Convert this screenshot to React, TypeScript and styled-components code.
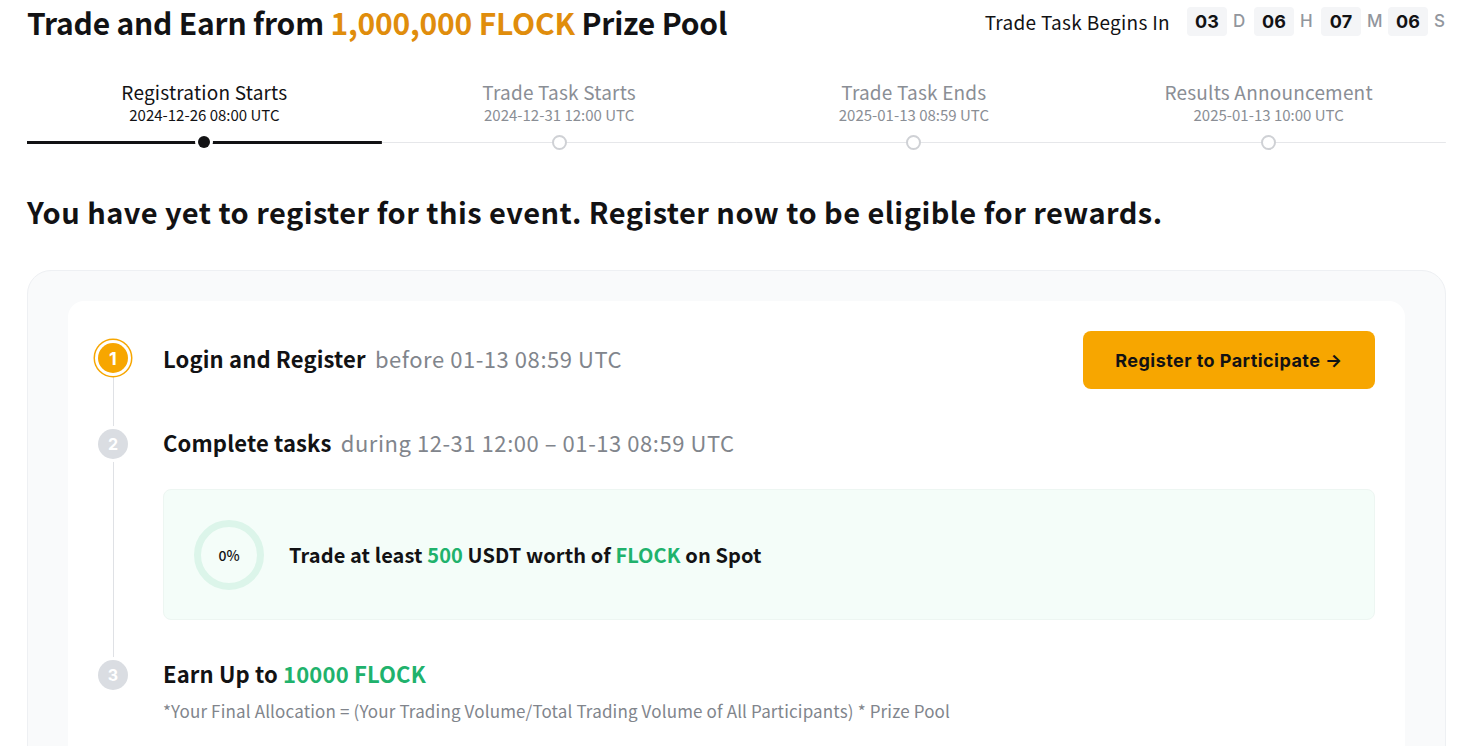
import styled, { createGlobalStyle } from 'styled-components';

const GlobalStyle = createGlobalStyle`
  html, body {
    margin: 0;
    padding: 0;
    background: #fff;
  }
  body {
    font-family: "Noto Sans CJK KR", "Noto Sans", sans-serif;
    color: #121214;
    overflow: hidden;
  }
`;

interface Milestone {
  label: string;
  date: string;
}

const milestones: Milestone[] = [
  { label: 'Registration Starts', date: '2024-12-26 08:00 UTC' },
  { label: 'Trade Task Starts', date: '2024-12-31 12:00 UTC' },
  { label: 'Trade Task Ends', date: '2025-01-13 08:59 UTC' },
  { label: 'Results Announcement', date: '2025-01-13 10:00 UTC' },
];

const countdown = [
  { value: '03', unit: 'D' },
  { value: '06', unit: 'H' },
  { value: '07', unit: 'M' },
  { value: '06', unit: 'S' },
];

export default function App() {
  return (
    <>
      <GlobalStyle />
      <Page>
        <Header>
          <Title>
            Trade and Earn from <Orange>1,000,000 FLOCK</Orange> Prize Pool
          </Title>
          <Countdown>
            <CountdownLabel>Trade Task Begins In</CountdownLabel>
            {countdown.map((c) => (
              <CountdownUnit key={c.unit}>
                <TimeBox>{c.value}</TimeBox>
                <UnitLetter>{c.unit}</UnitLetter>
              </CountdownUnit>
            ))}
          </Countdown>
        </Header>

        <Timeline>
          {milestones.map((m, i) => (
            <Milestone key={m.label}>
              <MilestoneLabel $active={i === 0}>{m.label}</MilestoneLabel>
              <MilestoneDate $active={i === 0}>{m.date}</MilestoneDate>
              <Track $active={i === 0}>
                <Dot $active={i === 0} />
              </Track>
            </Milestone>
          ))}
        </Timeline>

        <Notice>You have yet to register for this event. Register now to be eligible for rewards.</Notice>

        <OuterCard>
          <InnerCard>
            <Steps>
              <Step>
                <StepHead $tall>
                  <Badge $active>1</Badge>
                  <StepTitle>
                    Login and Register <Muted>before 01-13 08:59 UTC</Muted>
                  </StepTitle>
                  <RegisterButton>Register to Participate →</RegisterButton>
                </StepHead>
              </Step>

              <Step>
                <StepHead>
                  <Badge>2</Badge>
                  <StepTitle>
                    Complete tasks <Muted>during 12-31 12:00 – 01-13 08:59 UTC</Muted>
                  </StepTitle>
                </StepHead>
                <TaskBox>
                  <Progress>
                    <svg width="72" height="72" viewBox="0 0 72 72">
                      <circle cx="36" cy="36" r="31.5" fill="none" stroke="#dcf5ea" strokeWidth="7" />
                    </svg>
                    <ProgressValue>0%</ProgressValue>
                  </Progress>
                  <TaskText>
                    Trade at least <Green>500</Green> USDT worth of <Green>FLOCK</Green> on Spot
                  </TaskText>
                </TaskBox>
              </Step>

              <Step>
                <StepHead>
                  <Badge>3</Badge>
                  <StepTitle>
                    Earn Up to <Green>10000 FLOCK</Green>
                  </StepTitle>
                </StepHead>
                <Footnote>
                  *Your Final Allocation = (Your Trading Volume/Total Trading Volume of All Participants) * Prize Pool
                </Footnote>
              </Step>
            </Steps>
          </InnerCard>
        </OuterCard>
      </Page>
    </>
  );
}

const Page = styled.div`
  padding: 0 20px 0 27px;
`;

const Header = styled.header`
  display: flex;
  align-items: center;
  justify-content: space-between;
  height: 44px;
`;

const Title = styled.h1`
  margin: 0;
  font-size: 30px;
  font-weight: 700;
  line-height: 44px;
  letter-spacing: -0.2px;
`;

const Orange = styled.span`
  color: #e08d0c;
`;

const Countdown = styled.div`
  display: flex;
  align-items: center;
  margin-top: -2px;
`;

const CountdownLabel = styled.span`
  font-size: 19px;
  letter-spacing: 0.3px;
  margin-right: 17px;
`;

const CountdownUnit = styled.div`
  display: flex;
  align-items: center;
  gap: 6px;
  margin-right: 9px;

  &:last-child {
    margin-right: 0;
  }
`;

const TimeBox = styled.span`
  width: 40px;
  height: 29px;
  border-radius: 4px;
  background: #f4f5f7;
  display: grid;
  place-items: center;
  font-family: Inter, sans-serif;
  font-weight: 700;
  font-size: 18px;
`;

const UnitLetter = styled.span`
  font-family: Inter, sans-serif;
  font-size: 17px;
  font-weight: 500;
  color: #92969d;
  width: 12px;
`;

const Timeline = styled.div`
  display: grid;
  grid-template-columns: repeat(4, 1fr);
  margin-top: 36px;
`;

const Milestone = styled.div`
  display: flex;
  flex-direction: column;
  align-items: center;
`;

const MilestoneLabel = styled.div<{ $active: boolean }>`
  font-size: 19px;
  letter-spacing: 0.2px;
  line-height: 24px;
  color: ${({ $active }) => ($active ? '#121214' : '#8a8e95')};
`;

const MilestoneDate = styled.div<{ $active: boolean }>`
  font-size: 15px;
  line-height: 20px;
  margin-top: 1px;
  color: ${({ $active }) => ($active ? '#121214' : '#8a8e95')};
`;

const Track = styled.div<{ $active: boolean }>`
  align-self: stretch;
  height: 16px;
  margin-top: 9px;
  display: flex;
  align-items: center;
  justify-content: center;
  background: linear-gradient(
    ${({ $active }) => ($active ? '#121214' : '#e6e7ea')},
    ${({ $active }) => ($active ? '#121214' : '#e6e7ea')}
  )
    center / 100% ${({ $active }) => ($active ? '3px' : '1px')} no-repeat;
`;

const Dot = styled.span<{ $active: boolean }>`
  box-sizing: border-box;
  width: ${({ $active }) => ($active ? '12px' : '15px')};
  height: ${({ $active }) => ($active ? '12px' : '15px')};
  border-radius: 50%;
  background: ${({ $active }) => ($active ? '#121214' : '#fff')};
  border: ${({ $active }) => ($active ? 'none' : '2px solid #cfd1d5')};
  box-shadow: 0 0 0 ${({ $active }) => ($active ? '3px' : '0')} #fff;
`;

const Notice = styled.h2`
  margin: 41px 0 0;
  font-size: 29px;
  letter-spacing: 0.45px;
  font-weight: 700;
  line-height: 40px;
`;

const OuterCard = styled.section`
  margin-top: 39px;
  background: #f9fafb;
  border: 1px solid #eef0f3;
  border-radius: 24px;
  padding: 30px 40px;
`;

const InnerCard = styled.div`
  background: #fff;
  border-radius: 16px;
  padding: 30px 30px 40px;
`;

const Steps = styled.div`
  display: flex;
  flex-direction: column;
  gap: 40px;
`;

const Step = styled.div`
  position: relative;

  &:not(:last-child)::before {
    content: '';
    position: absolute;
    left: 15px;
    top: 22px;
    bottom: -60px;
    width: 1px;
    background: #dfe1e5;
  }
`;

const StepHead = styled.div<{ $tall?: boolean }>`
  position: relative;
  display: flex;
  align-items: center;
  min-height: ${({ $tall }) => ($tall ? '58px' : '30px')};
`;

const Badge = styled.span<{ $active?: boolean }>`
  flex: none;
  width: 30px;
  height: 30px;
  border-radius: 50%;
  display: grid;
  place-items: center;
  margin-right: 35px;
  font-family: Inter, sans-serif;
  font-size: ${({ $active }) => ($active ? '18px' : '16px')};
  font-weight: 700;
  color: #fff;
  background: ${({ $active }) => ($active ? '#f7a600' : '#dadde2')};
  box-shadow: ${({ $active }) => ($active ? '0 0 0 3px #fff, 0 0 0 4.5px #f7a600' : '0 0 0 3px #fff')};
  position: relative;
  z-index: 1;
  margin-top: ${({ $active }) => ($active ? '-4px' : '0')};
`;

const StepTitle = styled.div`
  flex: 1;
  font-size: 22px;
  letter-spacing: 0.15px;
  font-weight: 700;
  line-height: 26px;
  padding-bottom: 4px;
`;

const Muted = styled.span`
  margin-left: 4px;
  font-weight: 400;
  font-size: 22px;
  letter-spacing: 0.55px;
  color: #81858c;
`;

const Green = styled.span`
  color: #20b26c;
`;

const RegisterButton = styled.button`
  width: 292px;
  height: 58px;
  border: none;
  border-radius: 8px;
  background: #f7a600;
  color: #121214;
  font-family: Inter, sans-serif;
  font-size: 18px;
  font-weight: 700;
  letter-spacing: 0.45px;
  cursor: pointer;
`;

const TaskBox = styled.div`
  margin: 30px 0 0 65px;
  height: 131px;
  box-sizing: border-box;
  background: #f4fdf9;
  border: 1px solid #edf6f2;
  border-radius: 8px;
  display: flex;
  align-items: center;
  padding-left: 29px;
  gap: 24px;
`;

const Progress = styled.div`
  position: relative;
  width: 72px;
  height: 72px;

  svg {
    display: block;
  }
`;

const ProgressValue = styled.span`
  position: absolute;
  inset: 0;
  display: grid;
  place-items: center;
  font-size: 14px;
  font-weight: 500;
`;

const TaskText = styled.div`
  font-size: 20px;
  letter-spacing: 0.1px;
  font-weight: 700;
`;

const Footnote = styled.div`
  margin: 9px 0 0 65px;
  font-size: 17px;
  letter-spacing: 0.15px;
  line-height: 24px;
  color: #81858c;
`;
